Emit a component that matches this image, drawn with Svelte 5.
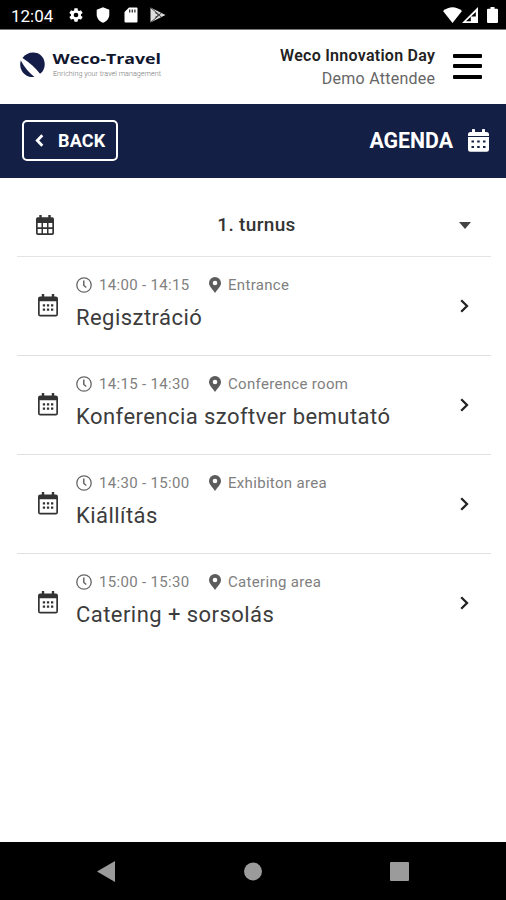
<script>
	const turnus = "1. turnus";
	const sessions = [
		{ time: "14:00 - 14:15", place: "Entrance", title: "Regisztráció" },
		{ time: "14:15 - 14:30", place: "Conference room", title: "Konferencia szoftver bemutató" },
		{ time: "14:30 - 15:00", place: "Exhibiton area", title: "Kiállítás" },
		{ time: "15:00 - 15:30", place: "Catering area", title: "Catering + sorsolás" }
	];
</script>

<div class="screen">
	<div class="status">
		<span class="clock">12:04</span>
		<svg class="gear" width="16" height="16" viewBox="0 0 24 24" fill="#fff"><path fill-rule="evenodd" d="M19.4 13c.1-.3.1-.6.1-1s0-.7-.1-1l2.200-1.600c.2-.2.200-.4.100-.6l-2-3.500c-.1-.2-.4-.3-.6-.2l-2.500 1c-.5-.4-1.100-.7-1.700-1l-.4-2.600c0-.3-.2-.5-.5-.5h-4c-.3 0-.5.200-.5.500l-.4 2.600c-.6.300-1.200.6-1.700 1l-2.500-1c-.2-.1-.5 0-.6.200l-2 3.500c-.1.200-.1.500.1.600L4.500 11v2l-2.100 1.600c-.2.200-.2.400-.1.600l2 3.500c.1.200.4.300.6.200l2.500-1c.5.400 1.100.7 1.700 1l.4 2.600c0 .3.200.5.500.5h4c.3 0 .5-.2.500-.5l.4-2.600c.6-.3 1.200-.6 1.700-1l2.500 1c.2.100.5 0 .6-.2l2-3.500c.1-.2.1-.5-.1-.6L19.400 13zM12 15.500a3.500 3.500 0 1 1 0-7 3.500 3.500 0 0 1 0 7z"/></svg>
		<svg class="shield" width="14" height="16" viewBox="0 0 14 16" fill="#fff"><path d="M7 .3l6.300 2.500v4.700c0 4-2.800 7-6.300 8.300C3.500 14.500.7 11.500.7 7.500V2.800z"/></svg>
		<svg class="card" width="14" height="16" viewBox="0 0 14 16"><path fill="#fff" d="M5 .5h7.500q1 0 1 1v13q0 1-1 1h-11q-1 0-1-1V5z"/><path stroke="#333" stroke-width="1.300" d="M5.700 2.500v3M8.300 2.500v3M10.900 2.500v3"/></svg>
		<svg class="play" width="16" height="16" viewBox="0 0 16 16"><path fill="#ddd" d="M.5.500L15.500 8 .5 15.500z"/><path fill="none" stroke="#444" d="M1 1l8.500 7L1 15M5 5.500L11.500 10M5 10.500L11.500 6"/></svg>
		<div class="signals">
			<svg width="19" height="16" viewBox="0 0 19 16"><path fill="#fff" d="M0 4Q9.500-3.500 19 4L9.500 16z"/></svg>
			<svg width="16" height="16" viewBox="0 0 16 16"><path fill="#fff" fill-rule="evenodd" d="M16 0v16H0zM13.800 5L4 14.300h4.800V9.500h5z"/><path fill="#fff" d="M9.800 10.300h1.400v4H9.800z"/></svg>
			<svg class="battery" width="11" height="16" viewBox="0 0 11 16"><path fill="#fff" d="M3.500 0h4v1.700H10q1 0 1 1V15q0 1-1 1H1q-1 0-1-1V2.700q0-1 1-1h2.500z"/></svg>
		</div>
	</div>

	<header>
		<svg class="logo" width="145" height="30" viewBox="0 0 145 30">
			<path fill="#141d47" d="M2.500 6C6.500.2 15-1.200 20.500 3c5 4 5.500 11.500 2 16.500-.8 1-1.600 1.700-2.500 2.300C15.500 15.500 10 11 2.500 6z"/>
			<path fill="#141d47" d="M.8 8.500C-.2 12 0 15.500 1.800 18.700c2.600 4.600 7.500 7 12.700 6.300C9.500 21 4.500 15.500.8 8.500z"/>
			<text class="brand" x="32.500" y="11.500" textLength="108.500" lengthAdjust="spacingAndGlyphs">Weco-Travel</text>
			<text class="slogan" x="33" y="23.500" textLength="108" lengthAdjust="spacingAndGlyphs">Enriching your travel management</text>
		</svg>
		<div class="who">
			<div class="event">Weco Innovation Day</div>
			<div class="attendee">Demo Attendee</div>
		</div>
		<div class="burger"><i></i><i></i><i></i></div>
	</header>

	<div class="titlebar">
		<div class="back">
			<svg width="9" height="13" viewBox="0 0 9 13"><path fill="none" stroke="#fff" stroke-width="2.800" d="M7.300 1.300L2.300 6.500l5 5.200"/></svg>
			<span>BACK</span>
		</div>
		<div class="page-title">
			<span>AGENDA</span>
			<svg width="21" height="24" viewBox="0 0 21 24">
				<path fill="#fff" fill-rule="evenodd" d="M4 3V.8q0-.8.8-.8h1.400q.8 0 .8.800V3h7V.8q0-.8.8-.8h1.400q.8 0 .8.800V3h1.500Q21 3 21 5.500V7H0V5.500Q0 3 2.500 3zM0 8h21v12.500q0 2.200-2.200 2.200H2.200Q0 22.700 0 20.500zM3.500 11.500v2h2.500v-2zM9.200 11.500v2h2.500v-2zM15 11.500v2h2.500v-2zM3.500 17v2h2.500v-2zM9.200 17v2h2.500v-2zM15 17v2h2.500v-2z"/>
			</svg>
		</div>
	</div>

	<main>
		<div class="turnus">
			<svg width="18" height="20" viewBox="0 0 18 20">
				<path fill="#333" fill-rule="evenodd" d="M3.300 2.300V0h2.400v2.300h6.600V0h2.400v2.300h1.600Q18 2.300 18 4v14.300q0 1.700-1.700 1.700H1.700Q0 20 0 18.300V4q0-1.700 1.700-1.700zM1.700 8v4.300h3.800V8zM7 8v4.300h4V8zM12.500 8v4.300h3.800V8zM1.700 13.900v4.300h3.800v-4.300zM7 13.900v4.300h4v-4.300zM12.500 13.900v4.300h3.800v-4.300z"/>
			</svg>
			<span>{turnus}</span>
			<svg width="12" height="7" viewBox="0 0 12 7"><path fill="#444" d="M0 0h12L6 7z"/></svg>
		</div>

		{#each sessions as s}
			<div class="session">
				<svg class="cal" width="20" height="23" viewBox="0 0 20 23">
					<path fill="#333" fill-rule="evenodd" d="M3.800 2.500V0h2.400v2.500h7.600V0h2.400v2.500h1.600Q20 2.500 20 4.700v15.600q0 2.200-2.200 2.200H2.200Q0 22.500 0 20.300V4.700q0-2.200 2.200-2.200zM1.700 7.300v13.500h16.600V7.300z"/>
					<path fill="#333" d="M4.800 10.300h2.300v2.300H4.800zM8.900 10.300h2.300v2.300H8.900zM13 10.300h2.300v2.300H13zM4.800 14.400h2.300v2.300H4.800zM8.900 14.400h2.300v2.300H8.900zM13 14.400h2.300v2.300H13z"/>
				</svg>
				<div class="info">
					<div class="meta">
						<svg width="16" height="16" viewBox="0 0 16 16" fill="none" stroke="#666" stroke-width="1.300"><circle cx="8" cy="8" r="7.200"/><path stroke-width="1.500" d="M7.800 3.500v5l2.500 2"/></svg>
						<span class="time">{s.time}</span>
						<svg width="12" height="16" viewBox="0 0 12 16"><path fill="#5c5c5c" fill-rule="evenodd" d="M6 16C2 10.500 0 8.800 0 6a6 6 0 0 1 12 0c0 2.800-2 4.500-6 10zM6 8.300a2.300 2.300 0 1 0 0-4.600 2.300 2.300 0 0 0 0 4.600z"/></svg>
						<span class="place">{s.place}</span>
					</div>
					<div class="title">{s.title}</div>
				</div>
				<svg class="arrow" width="9" height="14" viewBox="0 0 9 14"><path fill="none" stroke="#222" stroke-width="2.300" d="M1.200 1.200L7 7l-5.800 5.800"/></svg>
			</div>
		{/each}
	</main>

	<nav>
		<svg width="18" height="21" viewBox="0 0 18 21"><path fill="#9b9b9b" d="M18 0v21L0 10.500z"/></svg>
		<svg width="18" height="19" viewBox="0 0 18 19"><circle cx="9" cy="9.500" r="9" fill="#9b9b9b"/></svg>
		<svg width="19" height="19" viewBox="0 0 19 19"><rect width="19" height="19" rx="1" fill="#9b9b9b"/></svg>
	</nav>
</div>

<style>
	:global(body) {
		margin: 0;
		background: #fff;
	}
	svg {
		display: block;
		flex: none;
	}
	.screen {
		display: flex;
		flex-direction: column;
		width: 506px;
		height: 900px;
		overflow: hidden;
		font-family: Roboto, "Liberation Sans", sans-serif;
		color: #333;
		white-space: nowrap;
	}
	.status {
		display: flex;
		align-items: center;
		box-sizing: border-box;
		height: 30px;
		padding: 1px 8px 0 11px;
		background: #000;
		border-bottom: 1px solid #777;
		color: #fff;
	}
	.clock {
		width: 57px;
		font-size: 17px;
		padding-top: 1px;
	}
	.shield {
		margin-left: 12px;
	}
	.card {
		margin-left: 14px;
	}
	.play {
		margin-left: 12px;
	}
	.signals {
		display: flex;
		margin-left: auto;
	}
	.battery {
		margin-left: 9px;
	}
	header {
		display: flex;
		align-items: center;
		height: 74px;
		padding: 0 24px 0 20px;
	}
	.logo {
		margin-top: -1px;
		overflow: visible;
	}
	.brand {
		font: bold 13.500px "Open Sans", sans-serif;
		fill: #10162e;
	}
	.slogan {
		font-size: 7px;
		font-weight: 300;
		fill: #777;
	}
	.who {
		margin-left: auto;
		text-align: right;
		font-size: 16px;
		line-height: 23px;
	}
	.event {
		color: #222;
		font-weight: 600;
		letter-spacing: 0.270px;
		margin-right: -0.270px;
	}
	.attendee {
		color: #666;
		letter-spacing: 0.250px;
		margin-right: -0.250px;
	}
	.burger {
		display: flex;
		flex-direction: column;
		gap: 6.500px;
		width: 29px;
		margin: -2px 0 0 18px;
	}
	.burger i {
		height: 4px;
		border-radius: 1px;
		background: #000;
	}
	.titlebar {
		display: flex;
		align-items: center;
		justify-content: space-between;
		box-sizing: border-box;
		height: 74px;
		padding: 0 17px 1px 22px;
		background: #141f45;
		color: #fff;
		font-weight: 700;
	}
	.back {
		display: flex;
		align-items: center;
		box-sizing: border-box;
		width: 96px;
		height: 41px;
		padding-left: 11px;
		border: 2.500px solid #fff;
		border-radius: 5px;
		font-size: 18px;
	}
	.back span {
		margin-left: 14px;
		letter-spacing: 0.200px;
	}
	.page-title {
		display: flex;
		align-items: center;
		font-size: 21.300px;
	}
	.page-title svg {
		margin-left: 15px;
	}
	main {
		flex: 1;
		padding: 0 15px 0 17px;
	}
	.turnus {
		display: flex;
		align-items: center;
		justify-content: space-between;
		height: 62px;
		padding: 16px 20px 0 19px;
		border-bottom: 1px solid #e4e4e4;
		font-size: 19px;
		font-weight: 500;
	}
	.turnus span {
		margin-top: -2px;
		letter-spacing: 0.350px;
	}
	.session {
		display: flex;
		align-items: flex-start;
		box-sizing: border-box;
		height: 99px;
		padding: 0 22px 0 21px;
		border-bottom: 1px solid #e0e0e0;
	}
	.session:last-child {
		border-bottom: 0;
	}
	.cal {
		margin-top: 37px;
	}
	.info {
		flex: 1;
		margin: 16px 0 0 18px;
	}
	.meta {
		display: flex;
		align-items: center;
		height: 23px;
		color: #808080;
		font-size: 15px;
		letter-spacing: 0.320px;
	}
	.time {
		width: 110px;
		margin-left: 7px;
	}
	.place {
		margin-left: 7px;
	}
	.title {
		margin-top: 7px;
		font-size: 22px;
		line-height: 30px;
		letter-spacing: 0.450px;
		color: #3c3c3c;
	}
	.arrow {
		margin-top: 41.500px;
	}
	nav {
		display: flex;
		align-items: center;
		justify-content: space-between;
		box-sizing: border-box;
		height: 58px;
		padding: 0 97px 0 97px;
		background: #000;
	}
</style>
